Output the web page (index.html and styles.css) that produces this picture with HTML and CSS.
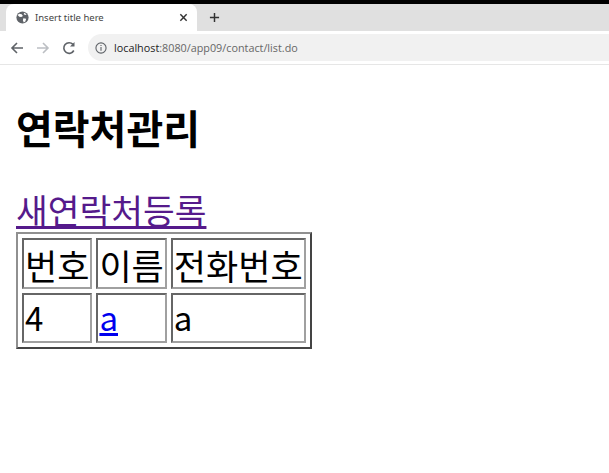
FILE: index.html
```html
<!DOCTYPE html>
<html lang="ko">
<head>
    <meta charset="UTF-8">
    <title>Insert title here</title>
    <link rel="stylesheet" href="styles.css">
</head>
<body>
    <div class="browser">
        <div class="tab-strip">
            <div class="tab">
                <svg class="favicon" width="13" height="13" viewBox="0 0 16 16">
                    <circle cx="8" cy="8" r="7.500" fill="#5f6368"/>
                    <path d="M4 3.500l3 .5 1.500 2-2 1.500-2.500-.5-2-2zM9 9l3.500 .5-1 3.500-2 1-1-2.500zM10 2l3 2-1.500 1-2-1z" fill="#fff"/>
                </svg>
                <span class="tab-title">Insert title here</span>
                <svg class="tab-close" width="9" height="9" viewBox="0 0 10 10">
                    <path d="M1.500 1.500l7 7M8.500 1.500l-7 7" stroke="#333" stroke-width="1.600"/>
                </svg>
            </div>
            <svg class="new-tab" width="11" height="11" viewBox="0 0 12 12">
                <path d="M6 1v10M1 6h10" stroke="#333" stroke-width="1.600"/>
            </svg>
        </div>
        <div class="toolbar">
            <svg class="nav-icon" width="14" height="14" viewBox="0 0 14 14">
                <path d="M13 7H2M7 2L2 7l5 5" fill="none" stroke="#5f6368" stroke-width="1.600"/>
            </svg>
            <svg class="nav-icon" width="14" height="14" viewBox="0 0 14 14">
                <path d="M1 7h11M7 2l5 5-5 5" fill="none" stroke="#bcbfc3" stroke-width="1.600"/>
            </svg>
            <svg class="nav-icon" width="14" height="14" viewBox="0 0 14 14">
                <path d="M11.800 9.500A5.300 5.300 0 1 1 11 3.400" fill="none" stroke="#5f6368" stroke-width="1.600"/>
                <path d="M12.500 1v4.500H8z" fill="#5f6368"/>
            </svg>
            <div class="omnibox">
                <svg width="12" height="12" viewBox="0 0 13 13">
                    <circle cx="6.500" cy="6.500" r="5.500" fill="none" stroke="#5f6368" stroke-width="1.200"/>
                    <path d="M6.500 5.500v4M6.500 3.200v1.200" stroke="#5f6368" stroke-width="1.200"/>
                </svg>
                <span class="url"><span class="url-host">localhost</span>:8080/app09/contact/list.do</span>
            </div>
        </div>
    </div>
    <div class="content">
        <h1>연락처관리</h1>
        <a class="new-link" href="#">새연락처등록</a>
        <table class="contact-table">
            <tr class="head-row">
                <td>번호</td>
                <td>이름</td>
                <td>전화번호</td>
            </tr>
            <tr class="data-row">
                <td>4</td>
                <td><a class="name-link" href="#">a</a></td>
                <td>a</td>
            </tr>
        </table>
    </div>
</body>
</html>
```

FILE: styles.css
```css
* {
    box-sizing: border-box;
}
body {
    margin: 0;
    background: #ffffff;
    font-family: "Noto Sans CJK KR", "Noto Sans", sans-serif;
    color: #000000;
}
.browser {
    border-top: 4px solid #000000;
}
.tab-strip {
    display: flex;
    align-items: flex-end;
    height: 27px;
    padding-left: 6px;
    background: #e0e0e0;
}
.tab {
    display: flex;
    align-items: center;
    width: 191px;
    height: 27px;
    padding: 0 9px 0 10px;
    background: #ffffff;
    border-radius: 8px 8px 0 0;
}
.favicon {
    flex: none;
    margin-right: 6px;
}
.tab-title {
    flex: 1;
    font-family: "Noto Sans", sans-serif;
    font-size: 9.500px;
    color: #444444;
}
.new-tab {
    align-self: center;
    margin-left: 12px;
}
.toolbar {
    display: flex;
    align-items: center;
    height: 34px;
    padding: 0 0 0 10px;
    gap: 12px;
    border-bottom: 1px solid #e6e6e6;
}
.nav-icon {
    flex: none;
}
.omnibox {
    flex: 1;
    display: flex;
    align-items: center;
    gap: 7px;
    height: 27px;
    padding-left: 7px;
    background: #f1f1f1;
    border-radius: 14px 0 0 14px;
}
.url {
    font-family: "Open Sans", sans-serif;
    font-size: 10.800px;
    color: #666666;
}
.url-host {
    color: #222222;
}
.content {
    padding: 0 16px;
}
h1 {
    margin: 35px 0 35px;
    font-size: 40px;
    line-height: 54px;
    font-weight: 700;
}
.new-link {
    display: block;
    width: fit-content;
    margin-bottom: 3px;
    font-size: 34.500px;
    line-height: 40px;
    color: #551a8b;
}
.contact-table {
    border: 2px solid;
    border-color: #909090 #444444 #444444 #909090;
    border-spacing: 4px;
    font-size: 35px;
}
.contact-table td {
    height: 50px;
    padding: 0 1px;
    border: 2px solid;
    border-color: #666666 #a0a0a0 #a0a0a0 #666666;
    line-height: 44px;
}
.head-row td {
    padding-top: 3px;
}
.data-row td {
    padding-bottom: 2px;
    line-height: 42px;
    font-size: 33px;
}
.name-link {
    color: #0000ee;
}
```
